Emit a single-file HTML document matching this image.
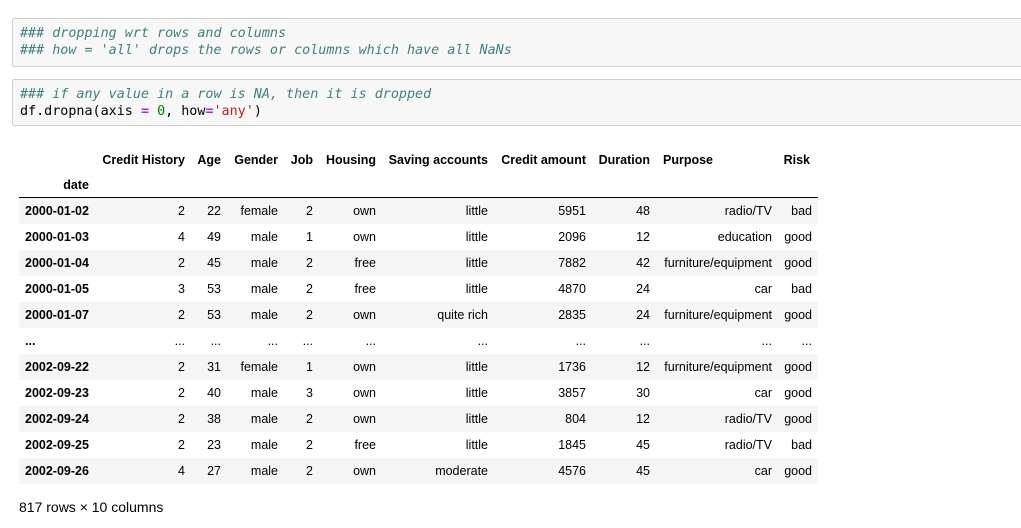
<!DOCTYPE html>
<html><head><meta charset="utf-8"><style>
body{margin:0;width:1021px;height:528px;background:#fff;overflow:hidden;position:relative;font-family:"Liberation Sans",Arial,sans-serif}
.code{position:absolute;left:12px;width:1015px;background:#f7f7f7;border:1px solid #cfcfcf;border-radius:2px;box-sizing:border-box;padding:6px 0 0 7px;font-family:"DejaVu Sans Mono","Liberation Mono",monospace;font-size:13.4px;line-height:17px;white-space:pre;color:#000}
.c{color:#408080;font-style:italic}
.o{color:#aa22ff;font-weight:bold}
.n{color:#008000}
.s{color:#ba2121}
table{position:absolute;left:19px;top:147px;border-collapse:collapse;table-layout:fixed;font-size:12.5px;color:#000}
td,th{padding:0;text-align:right;height:26px;white-space:nowrap;overflow:visible}
th{font-weight:bold}
tbody tr:nth-child(odd){background:#f5f5f5}
tbody tr.w{background:#fff}
thead tr.last th{border-bottom:1px solid #000;height:24px}
tbody th{text-align:left;padding-left:6px}
.foot{position:absolute;left:19px;top:499px;font-size:14px}
</style></head><body>
<div class="code" style="top:18px;height:49px"><span class="c">### dropping wrt rows and columns
### how = 'all' drops the rows or columns which have all NaNs</span></div>
<div class="code" style="top:79px;height:47px"><span class="c">### if any value in a row is NA, then it is dropped</span>
df.dropna(axis <span class="o">=</span> <span class="n">0</span>, how<span class="o">=</span><span class="s">'any'</span>)</div>
<table>
<colgroup><col style="width:72px"><col style="width:94px"><col style="width:36px"><col style="width:57px"><col style="width:35px"><col style="width:63px"><col style="width:112px"><col style="width:98px"><col style="width:64px"><col style="width:122px"><col style="width:46px"></colgroup>
<thead>
<tr><th></th><th>Credit History</th><th>Age</th><th>Gender</th><th>Job</th><th>Housing</th><th>Saving accounts</th><th>Credit amount</th><th>Duration</th><th style="text-align:left;padding-left:13px">Purpose</th><th style="padding-right:8px">Risk</th></tr>
<tr class="last"><th style="padding-right:2px">date</th><th></th><th></th><th></th><th></th><th></th><th></th><th></th><th></th><th></th><th></th></tr>
</thead>
<tbody>
<tr><th>2000-01-02</th><td>2</td><td>22</td><td>female</td><td>2</td><td>own</td><td>little</td><td>5951</td><td>48</td><td>radio/TV</td><td style="padding-right:6px">bad</td></tr>
<tr><th>2000-01-03</th><td>4</td><td>49</td><td>male</td><td>1</td><td>own</td><td>little</td><td>2096</td><td>12</td><td>education</td><td style="padding-right:6px">good</td></tr>
<tr><th>2000-01-04</th><td>2</td><td>45</td><td>male</td><td>2</td><td>free</td><td>little</td><td>7882</td><td>42</td><td>furniture/equipment</td><td style="padding-right:6px">good</td></tr>
<tr><th>2000-01-05</th><td>3</td><td>53</td><td>male</td><td>2</td><td>free</td><td>little</td><td>4870</td><td>24</td><td>car</td><td style="padding-right:6px">bad</td></tr>
<tr><th>2000-01-07</th><td>2</td><td>53</td><td>male</td><td>2</td><td>own</td><td>quite rich</td><td>2835</td><td>24</td><td>furniture/equipment</td><td style="padding-right:6px">good</td></tr>
<tr class="w"><th>...</th><td>...</td><td>...</td><td>...</td><td>...</td><td>...</td><td>...</td><td>...</td><td>...</td><td>...</td><td style="padding-right:6px">...</td></tr>
<tr><th>2002-09-22</th><td>2</td><td>31</td><td>female</td><td>1</td><td>own</td><td>little</td><td>1736</td><td>12</td><td>furniture/equipment</td><td style="padding-right:6px">good</td></tr>
<tr><th>2002-09-23</th><td>2</td><td>40</td><td>male</td><td>3</td><td>own</td><td>little</td><td>3857</td><td>30</td><td>car</td><td style="padding-right:6px">good</td></tr>
<tr><th>2002-09-24</th><td>2</td><td>38</td><td>male</td><td>2</td><td>own</td><td>little</td><td>804</td><td>12</td><td>radio/TV</td><td style="padding-right:6px">good</td></tr>
<tr><th>2002-09-25</th><td>2</td><td>23</td><td>male</td><td>2</td><td>free</td><td>little</td><td>1845</td><td>45</td><td>radio/TV</td><td style="padding-right:6px">bad</td></tr>
<tr><th>2002-09-26</th><td>4</td><td>27</td><td>male</td><td>2</td><td>own</td><td>moderate</td><td>4576</td><td>45</td><td>car</td><td style="padding-right:6px">good</td></tr>
</tbody>
</table>
<div class="foot">817 rows × 10 columns</div>
</body></html>
